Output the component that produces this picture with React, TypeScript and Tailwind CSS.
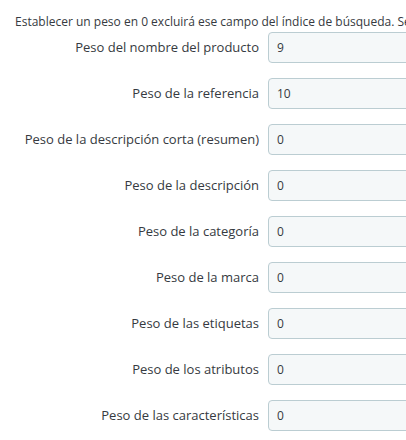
import React from "react";

const rows: [string, string][] = [
  ["Peso del nombre del producto", "9"],
  ["Peso de la referencia", "10"],
  ["Peso de la descripción corta (resumen)", "0"],
  ["Peso de la descripción", "0"],
  ["Peso de la categoría", "0"],
  ["Peso de la marca", "0"],
  ["Peso de las etiquetas", "0"],
  ["Peso de los atributos", "0"],
  ["Peso de las características", "0"],
];

export default function App() {
  return (
    <div
      className="w-[406px] h-[440px] overflow-hidden bg-white text-[12px] text-[#363a41]"
      style={{ fontFamily: '"Open Sans", "Noto Sans", sans-serif' }}
    >
      <div className="w-[600px]">
        <p className="pl-[15px] pt-[13px] leading-[17px] whitespace-nowrap">
          Establecer un peso en 0 excluirá ese campo del índice de búsqueda. Se recomienda usar un peso alto para los campos más importantes.
        </p>
        <div className="flex flex-col gap-[15px] pt-[2px]">
          {rows.map(([label, value]) => (
            <div key={label} className="flex items-center">
              <div className="w-[259px] text-right whitespace-nowrap text-[13px]">{label}</div>
              <div className="ml-[9px] w-[200px] h-[31px] flex items-center px-[8px] bg-[#f5f8f9] border border-[#bbcdd2] rounded-[4px]">
                {value}
              </div>
            </div>
          ))}
        </div>
      </div>
    </div>
  );
}
